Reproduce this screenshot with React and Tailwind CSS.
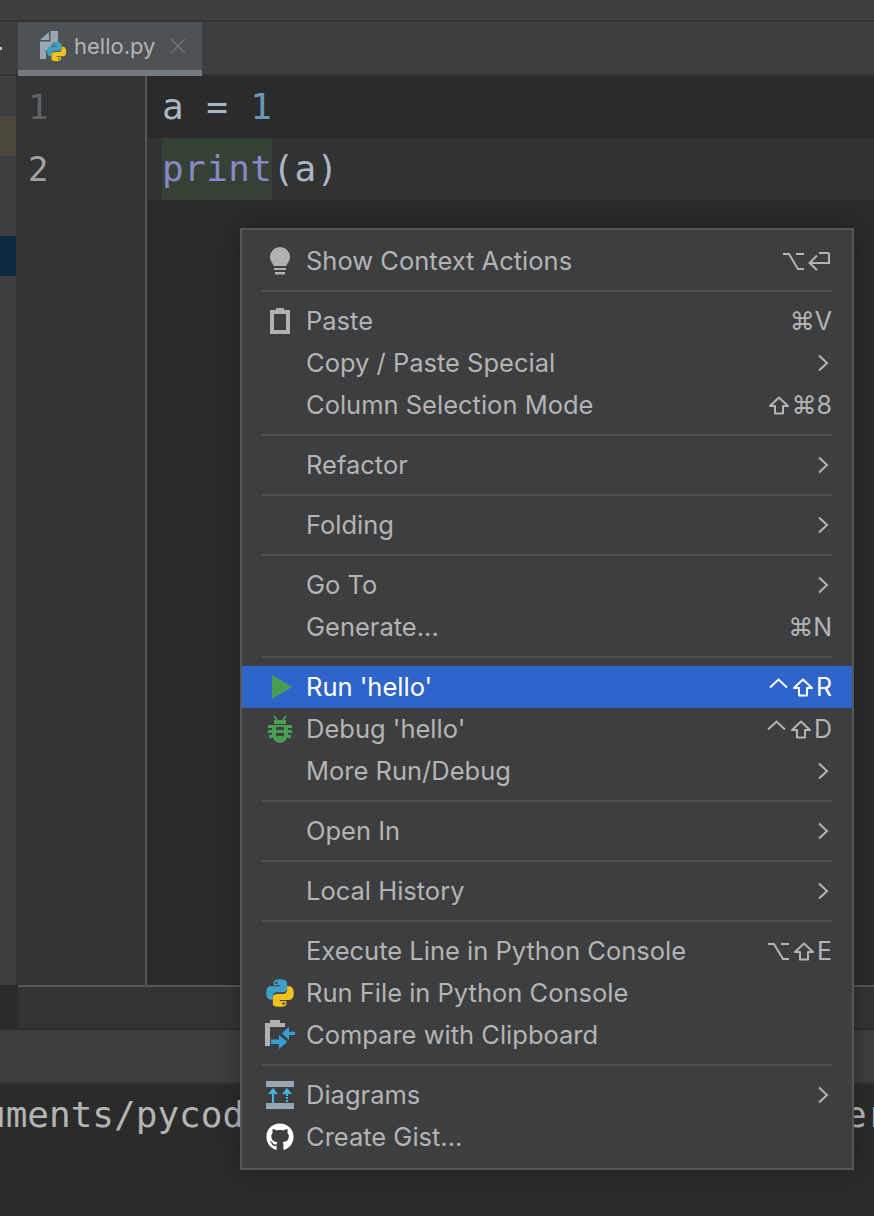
import React from 'react';
import { FaGithub } from 'react-icons/fa';

const PythonLogo = ({ className }) => (
  <svg viewBox="0 0 24 24" className={className}>
    <path fill="#3f9fc9" fillRule="evenodd" d="M11.9 1C6.600 1 6.900 3.300 6.900 3.300v2.400h5.200v.8H4.900S1 6.100 1 11.800s3.300 5.600 3.300 5.600h2v-2.800s-.1-3.300 3.200-3.300h5.100s3.100 0 3.100-3V4.100S18.300 1 11.900 1zM9.100 2.700a1 1 0 1 1 0 2 1 1 0 0 1 0-2z" />
    <path fill="#f2c21b" fillRule="evenodd" d="M12.100 23c5.300 0 5-2.300 5-2.300v-2.400h-5.200v-.8h7.200s3.900.4 3.900-5.300-3.300-5.600-3.300-5.600h-2v2.800s.1 3.300-3.200 3.300H9.400s-3.100 0-3.100 3v5.200S5.700 23 12.100 23zm2.800-1.700a1 1 0 1 1 0-2 1 1 0 0 1 0 2z" />
  </svg>
);

const FileIcon = () => (
  <div className="relative w-[27px] h-[31px] shrink-0">
    <svg viewBox="0 0 27 31" className="absolute inset-0 w-full h-full">
      <path fill="#9aa7b0" d="M0 9 L9 1 L9 9 Z M10.500 0 H18 V12 H14 L6 20 V28 H0 V10.500 H10.500 Z" />
    </svg>
    <PythonLogo className="absolute left-[6px] top-[10px] w-[21px] h-[21px]" />
  </div>
);

const BulbIcon = () => (
  <svg viewBox="0 0 20 28" className="w-[20px] h-[28px]">
    <path fill="#afb1b3" d="M10 0a10 10 0 0 0-10 10c0 4 2.500 6 4 9h12c1.500-3 4-5 4-9a10 10 0 0 0-10-10z" />
    <rect x="4" y="21" width="12" height="2" fill="#afb1b3" />
    <rect x="5" y="25" width="10" height="2.500" fill="#afb1b3" />
  </svg>
);

const ClipboardIcon = () => (
  <svg viewBox="0 0 20 26" className="w-[20px] h-[26px]">
    <path fill="#afb1b3" fillRule="evenodd" d="M0 2h6V0h8v2h6v24H0zM4 6v16h12V6z" />
  </svg>
);

const RunIcon = () => (
  <svg viewBox="0 0 20 24" className="ml-[3px] w-[20px] h-[24px]">
    <path fill="#499c54" d="M0 0l20 12L0 24z" />
  </svg>
);

const BugIcon = () => (
  <svg viewBox="0 0 26 28" className="w-[26px] h-[28px]">
    <path stroke="#499c54" strokeWidth="2" fill="none" d="M7 1l3 4M19 1l-3 4" />
    <path fill="#499c54" fillRule="evenodd" d="M7 5h12v4h-12zM1 10h24v3h-4v2h4v3h-4v2h3v3h-4c-1 3-4 5-7 5s-6-2-7-5H2v-3h3v-2H1v-3h4v-2H1zM9 12v3h8v-3zM9 18v3h8v-3z" />
  </svg>
);

const CompareIcon = () => (
  <svg viewBox="0 0 30 30" className="w-[30px] h-[30px]">
    <path fill="#afb1b3" d="M0 3h5V0h10v3h5v4H5v19H0z" />
    <path fill="#389fd6" d="M17 13.300L24 6.700v5h6V15h-6v5zM22.300 21.700L14 15v4.500H6V24h8v5z" />
  </svg>
);

const DiagramIcon = () => (
  <svg viewBox="0 0 28 28" className="w-[28px] h-[28px]">
    <rect width="28" height="6" fill="#9aa7b0" />
    <rect y="22" width="28" height="6" fill="#9aa7b0" />
    <path fill="#40b6e0" d="M7 7l5 6H8v9H6v-9H2zM21 7l5 6h-4v2h-2v-2h-4zM20 16h2v2h-2zM20 19h2v2h-2z" />
  </svg>
);

const GithubIcon = () => <FaGithub className="w-[28px] h-[28px] text-white" />;

const Chevron = () => (
  <svg viewBox="0 0 12 18" className="w-[12px] h-[18px]">
    <path d="M2 1.500L10 9l-8 7.500" fill="none" stroke="currentColor" strokeWidth="2" />
  </svg>
);

// modifier key symbols, the installed fonts draw these too differently
const ShiftKey = () => (
  <svg viewBox="0 0 22 19" className="w-[22px] h-[19px] shrink-0">
    <path d="M11 1.500L20 10h-5v7.500H7V10H2z" fill="none" stroke="currentColor" strokeWidth="2" strokeLinejoin="round" />
  </svg>
);

const OptionKey = () => (
  <svg viewBox="0 0 21 19" className="w-[21px] h-[19px] shrink-0">
    <path d="M0 2h6l9 15h6M13 2h8" fill="none" stroke="currentColor" strokeWidth="2" />
  </svg>
);

const ReturnKey = () => (
  <svg viewBox="0 0 22 19" className="w-[22px] h-[19px] shrink-0">
    <path d="M21 1h0v10H2M9 3.500L1.500 11 9 18" fill="none" stroke="currentColor" strokeWidth="2" />
    <path d="M11 1h10" stroke="currentColor" strokeWidth="2" />
  </svg>
);

const ControlKey = () => (
  <svg viewBox="0 0 19 10" className="w-[19px] h-[10px] shrink-0 self-start mt-[3px]">
    <path d="M1 9.500L9.500 1.500 18 9.500" fill="none" stroke="currentColor" strokeWidth="2" />
  </svg>
);

const groups = [
  [{ icon: <BulbIcon />, label: 'Show Context Actions', keys: <><OptionKey /><span className="w-[4px]" /><ReturnKey /><span className="w-[2px]" /></> }],
  [
    { icon: <ClipboardIcon />, label: 'Paste', keys: '⌘V' },
    { label: 'Copy / Paste Special', sub: true },
    { label: 'Column Selection Mode', keys: <><ShiftKey /><span className="ml-[2px]">⌘8</span></> },
  ],
  [{ label: 'Refactor', sub: true }],
  [{ label: 'Folding', sub: true }],
  [
    { label: 'Go To', sub: true },
    { label: 'Generate...', keys: '⌘N' },
  ],
  [
    { icon: <RunIcon />, label: "Run 'hello'", keys: <><ControlKey /><span className="w-[4px]" /><ShiftKey /><span className="ml-[2px]">R</span></>, active: true },
    { icon: <BugIcon />, label: "Debug 'hello'", keys: <><ControlKey /><span className="w-[4px]" /><ShiftKey /><span className="ml-[2px]">D</span></> },
    { label: 'More Run/Debug', sub: true },
  ],
  [{ label: 'Open In', sub: true }],
  [{ label: 'Local History', sub: true }],
  [
    { label: 'Execute Line in Python Console', keys: <><OptionKey /><span className="w-[4px]" /><ShiftKey /><span className="ml-[2px]">E</span></> },
    { icon: <PythonLogo className="w-[30px] h-[30px]" />, label: 'Run File in Python Console' },
    { icon: <CompareIcon />, label: 'Compare with Clipboard' },
  ],
  [
    { icon: <DiagramIcon />, label: 'Diagrams', sub: true },
    { icon: <GithubIcon />, label: 'Create Gist...' },
  ],
];

const MenuRow = ({ item }) => (
  <div className={`flex items-center h-[42px] pl-[20px] pr-[20px] ${item.active ? 'bg-[#2f65ca] text-white' : 'text-[#b4b4b4]'}`}>
    <div className="w-[36px] flex justify-center shrink-0">{item.icon}</div>
    <span className="ml-[8px] flex-1 text-[25.500px] leading-none whitespace-nowrap">{item.label}</span>
    {item.keys && <span className="flex items-center text-[25px] leading-none whitespace-nowrap font-['Inter','DejaVu_Sans',sans-serif]">{item.keys}</span>}
    {item.sub && <span className="mr-[3px] flex"><Chevron /></span>}
  </div>
);

export default function App() {
  return (
    <div className="relative w-[874px] h-[1216px] overflow-hidden flex flex-col bg-[#2b2b2b] font-['Inter',sans-serif]">
      {/* title strip */}
      <div className="h-[20px] bg-[#3d3e40] shrink-0" />
      <div className="h-[2px] bg-[#323232] shrink-0" />

      {/* tab row */}
      <div className="h-[54px] shrink-0 flex bg-[#3d3e40] border-b-2 border-[#323232]">
        <div className="w-[18px] flex items-center">
          <div className="w-[2px] h-[3px] bg-[#c4c4c4]" />
        </div>
        <div className="w-[184px] h-[54px] bg-[#4e5254] border-b-[6px] border-[#747a80] flex items-center pl-[22px] text-[#b4b4b4]">
          <FileIcon />
          <span className="ml-[7px] text-[22px] leading-none">hello.py</span>
          <svg viewBox="0 0 16 16" className="ml-[15px] w-[16px] h-[16px]">
            <path d="M1 1l14 14M15 1L1 15" stroke="#6e7275" strokeWidth="1.500" />
          </svg>
        </div>
      </div>

      {/* editor */}
      <div className="flex h-[909px] shrink-0 font-['DejaVu_Sans_Mono',monospace] text-[36px] tracking-[0.4px]">
        <div className="w-[16px] bg-[#3d3e40] flex flex-col shrink-0">
          <div className="h-[40px] mt-[40px] bg-[#4b473b]" />
          <div className="h-[40px] mt-[80px] bg-[#0d293e]" />
        </div>
        <div className="w-[131px] shrink-0 bg-[#313335] border-r-2 border-[#555555] pl-[12px] text-[34px]">
          <div className="h-[62px] flex items-center text-[#606366]">1</div>
          <div className="h-[62px] flex items-center text-[#a4a3a3]">2</div>
        </div>
        <div className="flex-1 bg-[#2b2b2b]">
          <div className="h-[62px] flex items-center pl-[15px] text-[#a9b7c6] whitespace-pre">
            a = <span className="text-[#6897bb]">1</span>
          </div>
          <div className="h-[62px] flex items-center pl-[15px] bg-[#323232] text-[#a9b7c6]">
            <span className="h-[62px] flex items-center bg-[#344134] text-[#8888c6]">print</span>
            (a)
          </div>
        </div>
      </div>

      {/* bottom panels */}
      <div className="h-[43px] shrink-0 bg-[#313335] border-t-2 border-[#555555] ml-[18px]" />
      <div className="h-[2px] shrink-0 bg-[#2b2b2b]" />
      <div className="h-[54px] shrink-0 bg-[#3d3e40] border-b-2 border-[#323232]" />
      <div className="flex-1 bg-[#2b2b2b] overflow-hidden">
        <div className="flex mt-[9px] -ml-[16px] whitespace-pre font-['DejaVu_Sans_Mono',monospace] text-[36px] leading-[44px] text-[#b4b4b4]">
          <span className="w-[270px] shrink-0">uments/pycod</span>
          <span className="ml-[591px] shrink-0">er</span>
        </div>
      </div>

      {/* context menu */}
      <div className="absolute left-[240px] top-[228px] w-[614px] h-[942px] bg-[#3d3e40] border-2 border-[#555658] py-[10px] shadow-[0_0_24px_rgba(0,0,0,0.25)]">
        {groups.map((group, i) => (
          <div key={i}>
            {i > 0 && (
              <div className="h-[18px] flex items-center px-[20px]">
                <div className="h-[2px] w-full bg-[#4f5052]" />
              </div>
            )}
            {group.map((item) => (
              <MenuRow key={item.label} item={item} />
            ))}
          </div>
        ))}
      </div>
    </div>
  );
}
